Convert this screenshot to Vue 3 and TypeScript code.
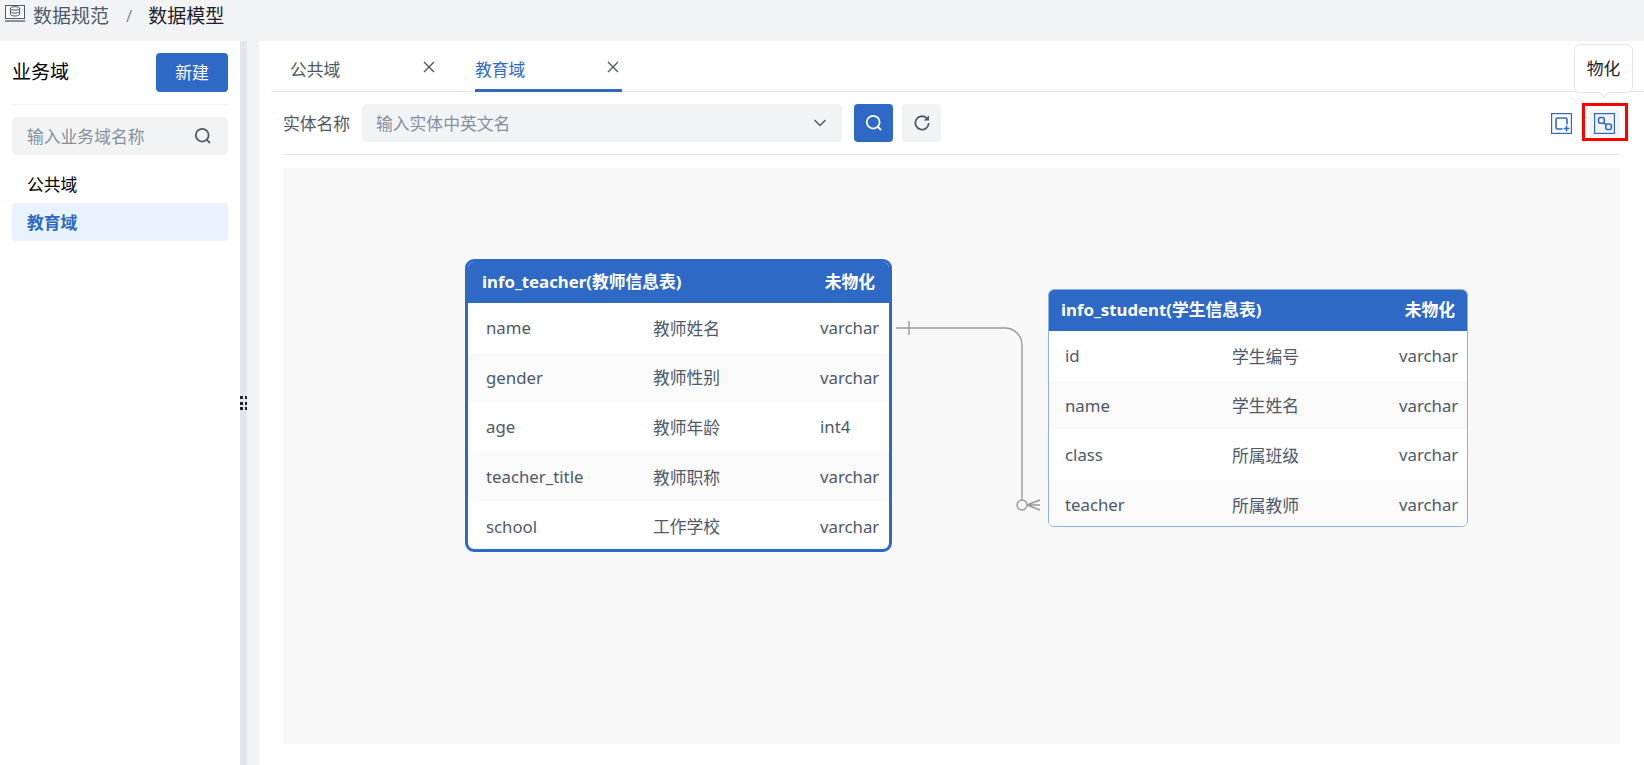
<script setup lang="ts">
interface Field {
  name: string
  label: string
  type: string
}

const teacherFields: Field[] = [
  { name: 'name', label: '教师姓名', type: 'varchar' },
  { name: 'gender', label: '教师性别', type: 'varchar' },
  { name: 'age', label: '教师年龄', type: 'int4' },
  { name: 'teacher_title', label: '教师职称', type: 'varchar' },
  { name: 'school', label: '工作学校', type: 'varchar' },
]

const studentFields: Field[] = [
  { name: 'id', label: '学生编号', type: 'varchar' },
  { name: 'name', label: '学生姓名', type: 'varchar' },
  { name: 'class', label: '所属班级', type: 'varchar' },
  { name: 'teacher', label: '所属教师', type: 'varchar' },
]
</script>

<template>
  <div class="page">
    <header class="crumbs">
      <svg class="crumbs__icon" viewBox="0 0 20 17" fill="none" stroke="#4e5969" stroke-width="1">
        <rect x="0.5" y="0.5" width="19" height="13" fill="#f7f8fa" />
        <ellipse cx="10" cy="3.4" rx="4.6" ry="1.8" />
        <path d="M5.4 3.4v5.800c0 1 2 1.800 4.600 1.800s4.600-.8 4.600-1.800V3.400M5.400 6.300c0 1 2 1.800 4.600 1.800s4.600-.8 4.600-1.800" />
        <path d="M0 16h20" stroke-width="2" stroke="#86909c" />
      </svg>
      <span class="crumbs__parent">数据规范</span>
      <span class="crumbs__sep">/</span>
      <span class="crumbs__current">数据模型</span>
    </header>

    <div class="body">
      <aside class="side">
        <div class="side__head">
          <span class="side__title">业务域</span>
          <button class="btn-new">新建</button>
        </div>
        <div class="side__search">
          <span>输入业务域名称</span>
          <svg class="icon" viewBox="0 0 18 18" fill="none" stroke="#4e5969" stroke-width="1.8">
            <circle cx="8.2" cy="8.2" r="6.4" />
            <path d="M13 13l3 3" />
          </svg>
        </div>
        <div class="side__item">公共域</div>
        <div class="side__item side__item--active">教育域</div>
      </aside>

      <div class="gutter">
        <div class="gutter__bar">
          <div class="gutter__dots"><i v-for="n in 6" :key="n" /></div>
        </div>
      </div>

      <main class="main">
        <nav class="tabs">
          <div class="tab">
            <span>公共域</span>
            <svg class="tab__close" viewBox="0 0 12 12" stroke="#4e5969" stroke-width="1.4"><path d="M1 1l10 10M11 1L1 11" /></svg>
          </div>
          <div class="tab tab--active">
            <span>教育域</span>
            <svg class="tab__close" viewBox="0 0 12 12" stroke="#4e5969" stroke-width="1.4"><path d="M1 1l10 10M11 1L1 11" /></svg>
          </div>
        </nav>

        <div class="content">
          <div class="toolbar">
            <span class="toolbar__label">实体名称</span>
            <div class="select">
              <span>输入实体中英文名</span>
              <svg class="select__arrow" viewBox="0 0 14 8" fill="none" stroke="#4e5969" stroke-width="1.4"><path d="M1.500 1l5.500 5.500L12.500 1" /></svg>
            </div>
            <button class="btn-icon btn-icon--primary">
              <svg class="icon" viewBox="0 0 18 18" fill="none" stroke="#fff" stroke-width="1.8">
                <circle cx="8.2" cy="8.2" r="6.4" />
                <path d="M13 13l3 3" />
              </svg>
            </button>
            <button class="btn-icon">
              <svg class="icon" viewBox="0 0 18 18" fill="none" stroke="#4e5969" stroke-width="1.8">
                <path d="M15.700 9A6.700 6.700 0 1 1 13.400 3.900" />
                <path d="M16 1.200V6.600H10.600Z" fill="#4e5969" stroke="none" />
              </svg>
            </button>
            <div class="toolbar__spacer" />
            <button class="tool">
              <svg viewBox="0 0 21 21" fill="none" stroke="#2f69c6">
                <rect x="0.600" y="0.600" width="19.800" height="19.800" stroke-width="1.200" />
                <path d="M16 11.500V6.500A1.500 1.500 0 0 0 14.500 5H6.500A1.500 1.500 0 0 0 5 6.500v8A1.500 1.500 0 0 0 6.500 16H11.500" stroke-width="1.600" />
                <path d="M15.500 12.500v6M12.500 15.500h6" stroke-width="1.500" />
              </svg>
            </button>
            <div class="tool-wrap">
              <div class="tooltip">物化</div>
              <button class="tool tool--hover">
                <svg viewBox="0 0 21 21" fill="none" stroke="#2f69c6">
                  <rect x="0.600" y="0.600" width="19.800" height="19.800" stroke-width="1.200" />
                  <rect x="4.500" y="4.500" width="5.800" height="5.800" rx="2" stroke-width="1.600" />
                  <rect x="11.800" y="11" width="5.500" height="5.500" rx="1.500" stroke-width="1.600" />
                  <path d="M9.500 9.500l2.800 2.300" stroke-width="1.600" />
                </svg>
              </button>
            </div>
          </div>

          <div class="content__rule" />

          <section class="canvas">
            <svg class="canvas__link" viewBox="0 0 1337 576" fill="none" stroke="#999" stroke-width="1.400">
              <path d="M613 160H722a17 17 0 0 1 17 17V332" />
              <path d="M626 153v14" />
              <circle cx="739" cy="337" r="5" fill="#f8f8f8" />
              <path d="M744 337l13-5M744 337h13M744 337l13 5" />
            </svg>

            <div class="entity entity--selected">
              <div class="entity__head">
                <span>info_teacher(教师信息表)</span>
                <span>未物化</span>
              </div>
              <div v-for="f in teacherFields" :key="f.name" class="entity__row">
                <span>{{ f.name }}</span>
                <span>{{ f.label }}</span>
                <span>{{ f.type }}</span>
              </div>
            </div>

            <div class="entity entity--plain">
              <div class="entity__head">
                <span>info_student(学生信息表)</span>
                <span>未物化</span>
              </div>
              <div v-for="f in studentFields" :key="f.name" class="entity__row">
                <span>{{ f.name }}</span>
                <span>{{ f.label }}</span>
                <span>{{ f.type }}</span>
              </div>
            </div>
          </section>
        </div>
      </main>
    </div>
  </div>
</template>

<style scoped>
.page,
.page * {
  box-sizing: border-box;
}

.page {
  display: flex;
  flex-direction: column;
  height: 100vh;
  overflow: hidden;
  background: #fff;
  font-family: "Noto Sans", "Noto Sans CJK SC", sans-serif;
  font-size: 16.8px;
  color: #1d2129;
}

button {
  border: 0;
  padding: 0;
  font: inherit;
  cursor: pointer;
}

.icon {
  width: 18px;
  height: 18px;
}

.crumbs {
  flex: 0 0 41px;
  display: flex;
  align-items: center;
  padding: 0 0 11px 5px;
  background: #f2f3f5;
  font-size: 19px;
}

.crumbs__icon {
  width: 20px;
  height: 17px;
  margin: -3px 8px 0 0;
}

.crumbs__parent {
  color: #4e5969;
}

.crumbs__sep {
  margin: 0 16px 0 17px;
  font-size: 16.8px;
  color: #86909c;
}

.body {
  flex: 1;
  display: flex;
  min-height: 0;
}

.side {
  flex: 0 0 240px;
  padding: 12px 12px 0;
}

.side__head {
  display: flex;
  align-items: center;
  justify-content: space-between;
  height: 52px;
  margin-bottom: 12px;
  padding-bottom: 12px;
  border-bottom: 1px solid #f2f3f5;
}

.side__title {
  padding-bottom: 3px;
  font-size: 19px;
  color: #000;
}

.btn-new {
  width: 72px;
  height: 39px;
  padding-bottom: 2px;
  border-radius: 4px;
  background: #2f69c6;
  color: #fff;
}

.side__search {
  display: flex;
  align-items: center;
  justify-content: space-between;
  height: 38px;
  padding: 0 16px 0 15px;
  border-radius: 4px;
  background: #f2f3f5;
  color: #86909c;
}

.side__item {
  display: flex;
  align-items: center;
  height: 38px;
  margin-top: 10px;
  padding-left: 15px;
  border-radius: 4px;
  color: #000;
}

.side__item + .side__item {
  margin-top: 0;
}

.side__item--active {
  background: #e8f3ff;
  color: #2f69c6;
  font-weight: 700;
}

.gutter {
  flex: 0 0 19px;
  background: #f2f3f5;
}

.gutter__bar {
  display: flex;
  align-items: center;
  justify-content: center;
  width: 7px;
  height: 100%;
  background: #e4e5ec;
}

.gutter__dots {
  display: grid;
  grid-template-columns: 2.5px 2.5px;
  gap: 2.5px 2px;
}

.gutter__dots i {
  height: 3px;
  background: #1d2129;
}

.main {
  flex: 1;
  min-width: 0;
  display: flex;
  flex-direction: column;
}

.tabs {
  flex: none;
  display: flex;
  height: 51px;
  margin-left: 12px;
  padding-left: 20px;
  border-bottom: 1px solid #e5e6eb;
}

.tab {
  flex: none;
  display: flex;
  align-items: center;
  justify-content: space-between;
  width: 147px;
  height: 51px;
  padding-top: 8px;
  margin-right: 37px;
  border-bottom: 3px solid transparent;
  color: #4e5969;
}

.tab span {
  margin-left: -1px;
}

.tab--active {
  color: #2f69c6;
  border-bottom-color: #2f69c6;
}

.tab--active span {
  margin-left: 0;
}

.tab__close {
  width: 12px;
  height: 12px;
  margin: -4px 3px 0 0;
}

.content {
  flex: 1;
  min-height: 0;
  display: flex;
  flex-direction: column;
  padding: 12px 24px 21px;
}

.content__rule {
  flex: none;
  height: 1px;
  margin: 12px 0 13px;
  background: #e5e6eb;
}

.toolbar {
  display: flex;
  align-items: center;
  height: 38px;
  flex: none;
}

.toolbar__label {
  width: 79px;
  color: #4e5969;
}

.toolbar__spacer {
  flex: 1;
}

.select {
  display: flex;
  align-items: center;
  justify-content: space-between;
  width: 480px;
  height: 38px;
  padding: 0 15px 0 14px;
  border-radius: 4px;
  background: #f2f3f5;
  color: #86909c;
}

.select__arrow {
  width: 14px;
  height: 8px;
}

.btn-icon {
  display: flex;
  align-items: center;
  justify-content: center;
  width: 39px;
  height: 38px;
  margin-left: 12px;
  border-radius: 4px;
  background: #f2f3f5;
}

.btn-icon + .btn-icon {
  margin-left: 9px;
}

.btn-icon--primary {
  background: #2f69c6;
}

.tool {
  display: flex;
  align-items: center;
  justify-content: center;
  width: 31px;
  height: 28px;
  border-radius: 4px;
  background: transparent;
}

.tool svg {
  width: 21px;
  height: 21px;
}

.tool--hover {
  background: #f2f3f5;
}

.tool-wrap {
  position: relative;
  margin-left: 12px;
  height: 28px;
}

.tool-wrap::after {
  content: "";
  position: absolute;
  inset: -6px -8px -4px -7px;
  border: 3px solid #f00;
  pointer-events: none;
}

.tooltip {
  position: absolute;
  left: -15px;
  bottom: 44px;
  width: 59px;
  height: 49px;
  display: flex;
  align-items: center;
  justify-content: center;
  padding-bottom: 2px;
  border: 1px solid #e5e6eb;
  border-radius: 6px;
  background: #fff;
  color: #1d2129;
}

.tooltip::after {
  content: "";
  position: absolute;
  left: 25px;
  bottom: -4px;
  width: 7px;
  height: 7px;
  background: #fff;
  border-right: 1px solid #e5e6eb;
  border-bottom: 1px solid #e5e6eb;
  transform: rotate(45deg);
}

.canvas {
  position: relative;
  flex: 1;
  min-height: 0;
  background: #f8f8f8;
}

.canvas__link {
  position: absolute;
  inset: 0;
  width: 100%;
  height: 100%;
}

.entity {
  position: absolute;
  overflow: hidden;
  background: #fff;
  color: #4e5969;
}

.entity--selected {
  left: 182px;
  top: 91px;
  width: 427px;
  height: 293px;
  border: 3px solid #2f69c6;
  border-radius: 9px;
}

.entity--plain {
  left: 765px;
  top: 121px;
  width: 420px;
  height: 238px;
  border: 1px solid #8fb0e3;
  border-radius: 6px;
}

.entity__head {
  display: flex;
  align-items: center;
  justify-content: space-between;
  height: 41px;
  padding: 0 14px 3px 14px;
  background: #2f69c6;
  color: #fff;
  font-weight: 700;
}

.entity--plain .entity__head {
  padding: 0 12px 3px 12px;
}

.entity__row {
  display: grid;
  grid-template-columns: 167px 167px auto;
  align-items: center;
  height: 49.6px;
  padding-left: 18px;
}

.entity--plain .entity__row {
  padding-left: 16px;
}

.entity__row:nth-child(odd) {
  background: #fafafa;
}
</style>
